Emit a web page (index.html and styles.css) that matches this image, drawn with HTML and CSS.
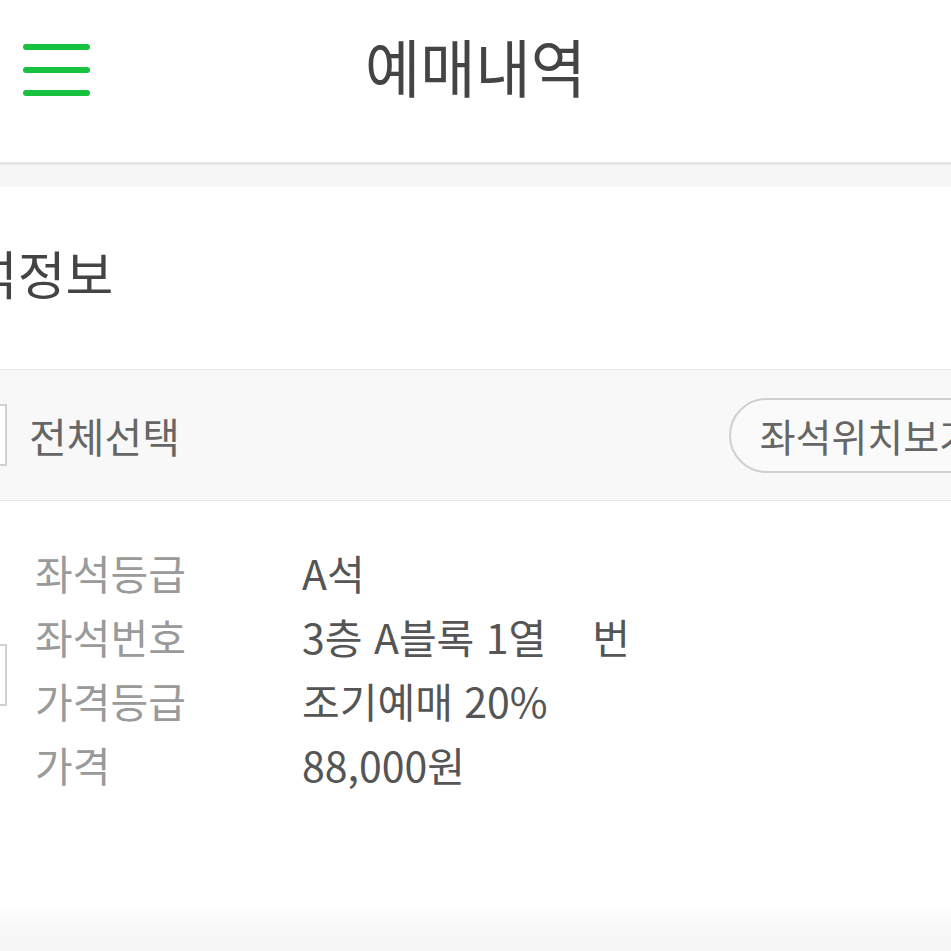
FILE: index.html
```html
<!DOCTYPE html>
<html lang="ko">
<head>
<meta charset="utf-8">
<title>예매내역</title>
<link rel="stylesheet" href="styles.css">
</head>
<body>
<header class="topbar">
  <button class="menu" aria-label="메뉴">
    <svg width="70" height="62" viewBox="0 0 70 62">
      <g stroke="#17c23f" stroke-width="6" stroke-linecap="round">
        <line x1="6" y1="8" x2="67" y2="8"/>
        <line x1="6" y1="31" x2="67" y2="31"/>
        <line x1="6" y1="54" x2="67" y2="54"/>
      </g>
    </svg>
  </button>
  <h1 class="title">예매내역</h1>
  <span class="spacer"></span>
</header>
<div class="band"></div>
<main class="seat">
  <h2 class="section-title">좌석정보</h2>
  <div class="select-bar">
    <span class="check"></span>
    <span class="select-label">전체선택</span>
    <button class="seat-map">좌석위치보기</button>
  </div>
  <div class="ticket">
    <span class="check check-ticket"></span>
    <dl class="info">
      <div class="row"><dt>좌석등급</dt><dd>A석</dd></div>
      <div class="row"><dt>좌석번호</dt><dd>3층 A블록 1열&nbsp;&nbsp;&nbsp;&nbsp;번</dd></div>
      <div class="row"><dt>가격등급</dt><dd>조기예매 20%</dd></div>
      <div class="row"><dt>가격</dt><dd>88,000원</dd></div>
    </dl>
  </div>
</main>
<div class="footer-band"></div>
</body>
</html>
```
FILE: styles.css
```css
html, body {
  margin: 0;
  padding: 0;
  background: #fff;
  overflow: hidden;
  width: 951px;
  height: 951px;
}
body {
  font-family: "Noto Sans CJK KR", "Noto Sans", sans-serif;
  color: #444;
}
.topbar {
  height: 162px;
  display: grid;
  grid-template-columns: 1fr auto 1fr;
  align-items: center;
  border-bottom: 3px solid #e6e6e6;
}
.menu {
  border: 0;
  background: none;
  padding: 0;
  margin: 0 0 22px 20px;
  width: 70px;
  height: 62px;
  justify-self: start;
}
.menu svg { display: block; }
.title {
  margin: 0 0 32px;
  font-size: 60px;
  font-weight: 400;
  color: #444;
  line-height: 1;
  transform: scaleY(1.05);
}
.band {
  height: 22px;
  background: #f7f7f7;
}
.seat {
  display: flex;
  flex-direction: column;
}
.section-title {
  margin: 54px 0 64px -78px;
  font-size: 52px;
  font-weight: 400;
  line-height: 64px;
  color: #444;
  white-space: nowrap;
}
.select-bar {
  height: 130px;
  border-top: 1px solid #e6e6e6;
  border-bottom: 1px solid #e6e6e6;
  background: #f8f8f8;
  display: flex;
  align-items: center;
}
.check {
  flex: none;
  width: 58px;
  height: 58px;
  border: 2px solid #d0d0d0;
  background: #fff;
  margin-left: -55px;
}
.select-label {
  margin-left: 22px;
  font-size: 41px;
  color: #666;
  line-height: 1;
}
.seat-map {
  margin-left: auto;
  margin-right: -54px;
  height: 75px;
  padding: 0 28px 0 29px;
  border: 2px solid #cfcfcf;
  border-radius: 38px;
  background: #fafafa;
  font-family: inherit;
  font-size: 39px;
  color: #666;
  line-height: 1;
  white-space: nowrap;
}
.ticket {
  display: flex;
  align-items: center;
  padding: 39px 0 114px;
}
.check-ticket {
  margin-top: 14px;
}
.info {
  margin: 0 0 0 28px;
}
.row {
  display: flex;
  height: 64px;
  align-items: center;
}
.row dt {
  width: 267px;
  font-size: 41px;
  color: #9a9a9a;
}
.row dd {
  margin: 0;
  font-size: 41px;
  color: #555;
  white-space: nowrap;
}
.footer-band {
  height: 60px;
  background: linear-gradient(#fdfdfd, #f7f7f7 20px);
}
```
